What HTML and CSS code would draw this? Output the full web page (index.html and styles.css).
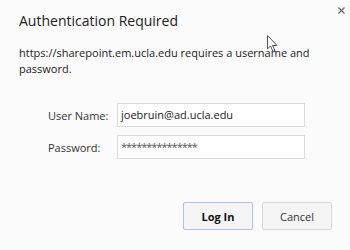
FILE: index.html
```html
<!DOCTYPE html>
<html>
<head>
<meta charset="utf-8">
<link rel="stylesheet" href="styles.css">
</head>
<body>
<div class="dialog">
  <div class="header">
    <h1 class="title">Authentication Required</h1>
    <svg class="close" width="7" height="7" viewBox="0 0 7 7"><path d="M0.5 0.5 L6.5 6.5 M6.5 0.5 L0.5 6.5" stroke="#6a6a6a" stroke-width="1.3" fill="none"/></svg>
  </div>
  <p class="message">https://sharepoint.em.ucla.edu requires a username and password.</p>
  <div class="form">
    <label class="label">User Name:</label>
    <div class="input">joebruin@ad.ucla.edu</div>
    <label class="label">Password:</label>
    <div class="input pw">***************</div>
  </div>
  <div class="buttons">
    <button class="btn primary">Log In</button>
    <button class="btn">Cancel</button>
  </div>
  <svg class="cursor" width="12" height="18" viewBox="0 0 12 18"><path d="M0.5 0.5 L0.5 14 L3.5 11 L6 16.5 L8 15.5 L5.5 10.5 L10 10.5 Z" fill="#fff" stroke="#555" stroke-width="1"/></svg>
</div>
</body>
</html>
```
FILE: styles.css
```css
html, body {
  margin: 0;
  padding: 0;
  background: #fbfbfb;
}
.dialog {
  position: relative;
  width: 350px;
  height: 250px;
  box-sizing: border-box;
  padding: 0 18px;
  font-family: "Open Sans", "Noto Sans", sans-serif;
  color: #222;
}
.header {
  display: flex;
  justify-content: space-between;
  align-items: flex-start;
}
.title {
  margin: 11px 0 0 1px;
  font-size: 14px;
  font-weight: normal;
  line-height: 20px;
  color: #222;
}
.close {
  display: block;
  margin: 7px -12.5px 0 0;
  flex: none;
}
.message {
  margin: 14px 0 0 1px;
  font-size: 11px;
  line-height: 16px;
  width: 305px;
  color: #222;
}
.form {
  display: grid;
  grid-template-columns: 69px 188px;
  row-gap: 8px;
  margin: 26px 0 0 30px;
  align-items: center;
}
.label {
  font-size: 11px;
  color: #333;
}
.input {
  box-sizing: border-box;
  height: 24px;
  border: 1.5px solid #dcdcdc;
  background: #fff;
  padding: 0 3px;
  font-size: 11px;
  line-height: 21px;
  color: #222;
}
.input.pw {
  letter-spacing: -1px;
  color: #555;
}
.buttons {
  display: flex;
  justify-content: flex-end;
  gap: 9px;
  margin-top: 43px;
}
.btn {
  box-sizing: border-box;
  width: 70px;
  height: 28px;
  border: 1px solid #dadada;
  border-radius: 2px;
  background: #f5f5f5;
  font-family: "Open Sans", "Noto Sans", sans-serif;
  font-size: 11px;
  color: #333;
  padding: 0;
}
.btn.primary {
  border-color: #a9c4f2;
  font-weight: bold;
  color: #111;
}
.cursor {
  position: absolute;
  left: 267px;
  top: 35px;
}
```
